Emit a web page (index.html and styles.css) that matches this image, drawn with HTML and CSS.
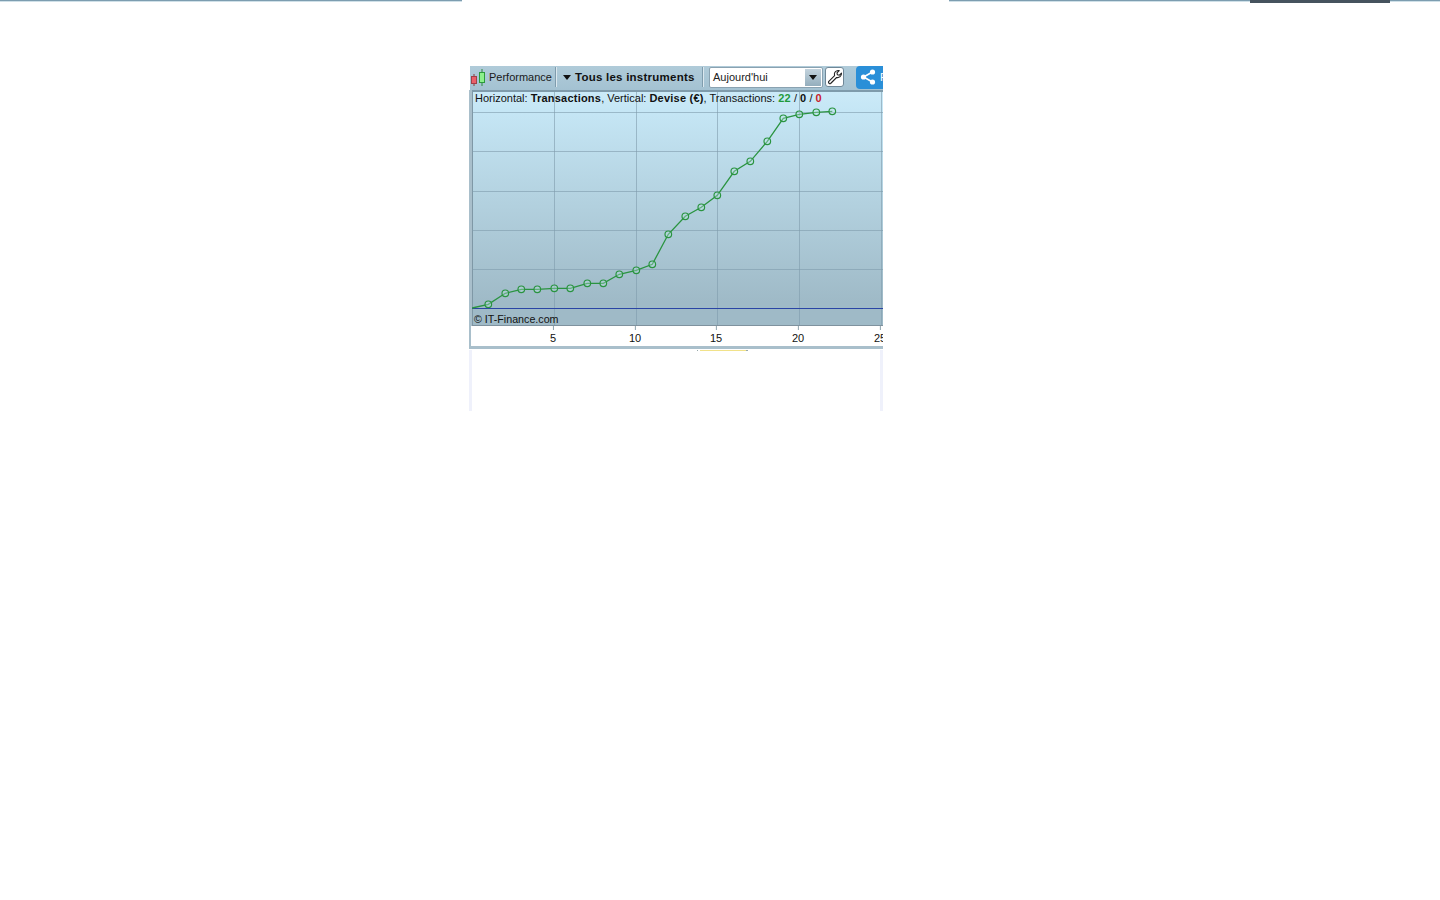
FILE: index.html
```html
<!DOCTYPE html>
<html lang="fr">
<head>
<meta charset="utf-8">
<title>Performance</title>
<link rel="stylesheet" href="styles.css">
</head>
<body>
<div class="topstrip">
  <div class="strip strip-left"></div>
  <div class="strip-gap"></div>
  <div class="strip strip-right"><div class="strip-dark"></div></div>
</div>
<main class="widget">
  <div class="toolbar">
    <svg class="candle" width="16" height="17" viewBox="0 0 16 17">
      <path d="M4 5v12" stroke="#8a3a3a" fill="none"/>
      <rect x="1.500" y="7.500" width="5" height="7" fill="#e9606a" stroke="#a04048"/>
      <path d="M12 0v17" stroke="#2c8a3c" fill="none"/>
      <rect x="9.500" y="3.500" width="5" height="10" fill="#8cf08c" stroke="#2c9a3c"/>
    </svg>
    <span class="perf">Performance</span>
    <span class="sep sep-a"></span>
    <span class="tri"></span>
    <span class="instr">Tous les instruments</span>
    <span class="sep sep-b"></span>
    <div class="select">
      <span class="select-val">Aujourd'hui</span>
      <span class="select-btn"><span class="tri"></span></span>
    </div>
    <div class="wrench">
      <svg width="16" height="16" viewBox="0 0 16 16">
        <path d="M1.600 12.600 7.600 6.600C6.900 4.400 8 1.800 11 1.500L12.200 1.600 10 3.800 10.400 5.800 12.400 6.200 14.500 4.100C14.700 7.300 12.200 9 9.600 8.500L3.600 14.500C2.600 15.200 1 13.800 1.600 12.600Z" fill="#fff" stroke="#222" stroke-width="1.100" stroke-linejoin="round"/>
      </svg>
    </div>
    <div class="share">
      <svg class="share-icon" width="16" height="16" viewBox="0 0 16 16">
        <path d="M12.500 3 3.500 8 12.500 13" stroke="#fff" stroke-width="1.600" fill="none"/>
        <circle cx="12.500" cy="3" r="2.600" fill="#fff"/>
        <circle cx="3.500" cy="8" r="2.600" fill="#fff"/>
        <circle cx="12.500" cy="13" r="2.600" fill="#fff"/>
      </svg>
      <span class="share-label">Partager</span>
    </div>
  </div>
  <div class="chart">
    <div class="plot">
      <svg class="plot-svg" width="411" height="234" viewBox="472 92 411 234">
        <g class="grid">
          <path d="M472 112.500H883M472 151.500H883M472 191.500H883M472 230.500H883M472 269.500H883"/>
          <path d="M554.500 92V326M636.500 92V326M717.500 92V326M799.500 92V326M881.500 92V326"/>
        </g>
        <path class="zero" d="M472 308.500H883"/>
        <polyline class="line" points="472,308 488.300,304.300 505.300,293.300 521.300,289.300 537.300,289.300 554.300,288.300 570.300,288.300 587.300,283.300 603.300,283.300 619.300,274.300 636.300,270.300 652.300,264.300 668.300,234.300 685.300,216.300 701.300,207.300 717.300,195.300 734.300,171.300 750.300,161.300 767.300,141.300 783.300,118.300 799.300,114.300 816.300,112.300 832.300,111.300"/>
        <g class="dots">
          <circle cx="488.300" cy="304.300" r="3.300"/><circle cx="505.300" cy="293.300" r="3.300"/><circle cx="521.300" cy="289.300" r="3.300"/><circle cx="537.300" cy="289.300" r="3.300"/><circle cx="554.300" cy="288.300" r="3.300"/><circle cx="570.300" cy="288.300" r="3.300"/><circle cx="587.300" cy="283.300" r="3.300"/><circle cx="603.300" cy="283.300" r="3.300"/><circle cx="619.300" cy="274.300" r="3.300"/><circle cx="636.300" cy="270.300" r="3.300"/><circle cx="652.300" cy="264.300" r="3.300"/><circle cx="668.300" cy="234.300" r="3.300"/><circle cx="685.300" cy="216.300" r="3.300"/><circle cx="701.300" cy="207.300" r="3.300"/><circle cx="717.300" cy="195.300" r="3.300"/><circle cx="734.300" cy="171.300" r="3.300"/><circle cx="750.300" cy="161.300" r="3.300"/><circle cx="767.300" cy="141.300" r="3.300"/><circle cx="783.300" cy="118.300" r="3.300"/><circle cx="799.300" cy="114.300" r="3.300"/><circle cx="816.300" cy="112.300" r="3.300"/><circle cx="832.300" cy="111.300" r="3.300"/>
        </g>
      </svg>
      <div class="legend">Horizontal: <b>Transactions</b>, Vertical: <b>Devise (€)</b>, Transactions: <b class="green">22</b> / <b>0</b> / <b class="red">0</b></div>
      <div class="copyright">© IT-Finance.com</div>
    </div>
    <div class="axis">
      <span class="tick t5">5</span>
      <span class="tick t10">10</span>
      <span class="tick t15">15</span>
      <span class="tick t20">20</span>
      <span class="tick t25">25</span>
    </div>
  </div>
  <div class="below">
    <div class="below-mark"></div>
  </div>
</main>
</body>
</html>
```
FILE: styles.css
```css
* { box-sizing: border-box; }
html, body { margin: 0; padding: 0; background: #fff; }
body { height: 900px; overflow: hidden; font-family: "Liberation Sans", Arial, sans-serif; color: #111; }

.topstrip { display: flex; height: 2px; }
.strip { height: 2px; background: linear-gradient(#7d9db0 0 50%, #cfe0e8 50%); }
.strip-left { width: 462px; }
.strip-gap { width: 487px; }
.strip-right { flex: 1; padding-left: 301px; }
.strip-dark { width: 140px; height: 3px; background: #46535e; }

.widget { width: 413px; margin: 64px 0 0 470px; }

.toolbar {
  height: 24px; display: flex; align-items: center; overflow: hidden;
  padding-bottom: 2px;
  background: linear-gradient(#b0cbd9, #a4c2d2);
  font-size: 11px;
}
.candle { flex: none; }
.perf { margin-left: 3px; width: 62px; white-space: nowrap; color: #1a1a1a; }
.sep { flex: none; width: 2px; height: 20px; background: linear-gradient(90deg, #7f9cad 50%, #dbe8ef 50%); }
.sep-a { margin-left: 4px; }
.tri { display: block; flex: none; width: 0; height: 0; border-left: 4px solid transparent; border-right: 4px solid transparent; border-top: 5px solid #111; }
.sep-a + .tri { margin-left: 6px; margin-top: 1px; }
.instr { margin-left: 4px; width: 119px; font-weight: bold; font-size: 11.500px; letter-spacing: 0.240px; white-space: nowrap; }
.sep-b { margin-left: 8px; }
.select {
  flex: none; width: 114px; height: 21px; margin-left: 5px; display: flex; align-items: center; justify-content: space-between;
  background: #fff; border: 1px solid #8aa2b1; border-radius: 2px; padding: 0 1px 0 3px;
}
.select-val { font-size: 11px; color: #222; }
.select-btn { width: 16px; height: 17px; display: flex; align-items: center; justify-content: center; background: linear-gradient(#c3d3dd, #94aebd); }
.wrench {
  flex: none; width: 19px; height: 20px; margin-left: 2px; display: flex; align-items: center; justify-content: center;
  background: #fff; border: 1px solid #6f8797; border-radius: 3px;
}
.share {
  flex: none; width: 60px; height: 23px; margin-left: 12px; display: flex; align-items: center; gap: 4px; padding-left: 4px;
  background: #2a8fd8; border-radius: 4px 0 0 4px; color: #fff; font-size: 11px;
}
.share-icon { flex: none; }
.share-label { white-space: nowrap; }

.chart {
  width: 414px; height: 259px; margin-left: -1px; background: #fff;
  border-left: 2px solid #a9bfcb; border-bottom: 3px solid #a9bfcb;
}
.plot {
  position: relative; height: 236px; margin-left: 1px; overflow: hidden;
  background: linear-gradient(#cbeaf8 0, #c5e6f5 8%, #9fbac7 90%, #9fbac7 100%);
  border-top: 2px solid #7f9bab; border-bottom: 1px solid #7f929e;
  box-shadow: -1px 0 0 #a9bfcb, inset 1px 0 0 #7f98a6;
}
.plot-svg { position: absolute; left: 0; top: 0; display: block; }
.grid path { fill: none; stroke: #7f9bac; stroke-width: 1; opacity: 0.6; }
.zero { fill: none; stroke: #2a45a5; stroke-width: 1; }
.line { fill: none; stroke: #2a9440; stroke-width: 1.300; }
.dots circle { fill: #c4e6e8; fill-opacity: 0.35; stroke: #2a9440; stroke-width: 1.200; }

.legend { position: absolute; left: 3px; top: 0; font-size: 11px; line-height: 12px; white-space: nowrap; color: #111; }
.legend b { letter-spacing: 0.220px; }
.green { color: #1f9a3a; }
.red { color: #c8202a; }
.copyright { position: absolute; left: 2px; top: 221px; font-size: 10.700px; line-height: 12px; color: #111; white-space: nowrap; }

.axis { position: relative; height: 20px; overflow: hidden; font-size: 11px; color: #111; }
.tick { position: absolute; top: 6px; line-height: 12px; transform: translateX(-50%); }
.tick::before { content: ""; position: absolute; left: 50%; top: -6px; width: 1px; height: 4px; background: #8fa3ae; }
.t5 { left: 82px; }
.t10 { left: 164px; }
.t15 { left: 245px; }
.t20 { left: 327px; }
.t25 { left: 409px; }

.below {
  width: 414px; height: 61px; margin: 1px 0 0 -1px; background: #fff;
  border-left: 3px solid #eff1fb; border-right: 3px solid #eff1fb;
}
.below-mark {
  width: 60px; height: 1px; margin-left: 221px;
  background: linear-gradient(90deg, transparent 0 6%, #9aa 6% 8%, transparent 8% 12%, #f1e28a 12% 88%, #9aa 88% 92%, transparent 92%);
}
```
